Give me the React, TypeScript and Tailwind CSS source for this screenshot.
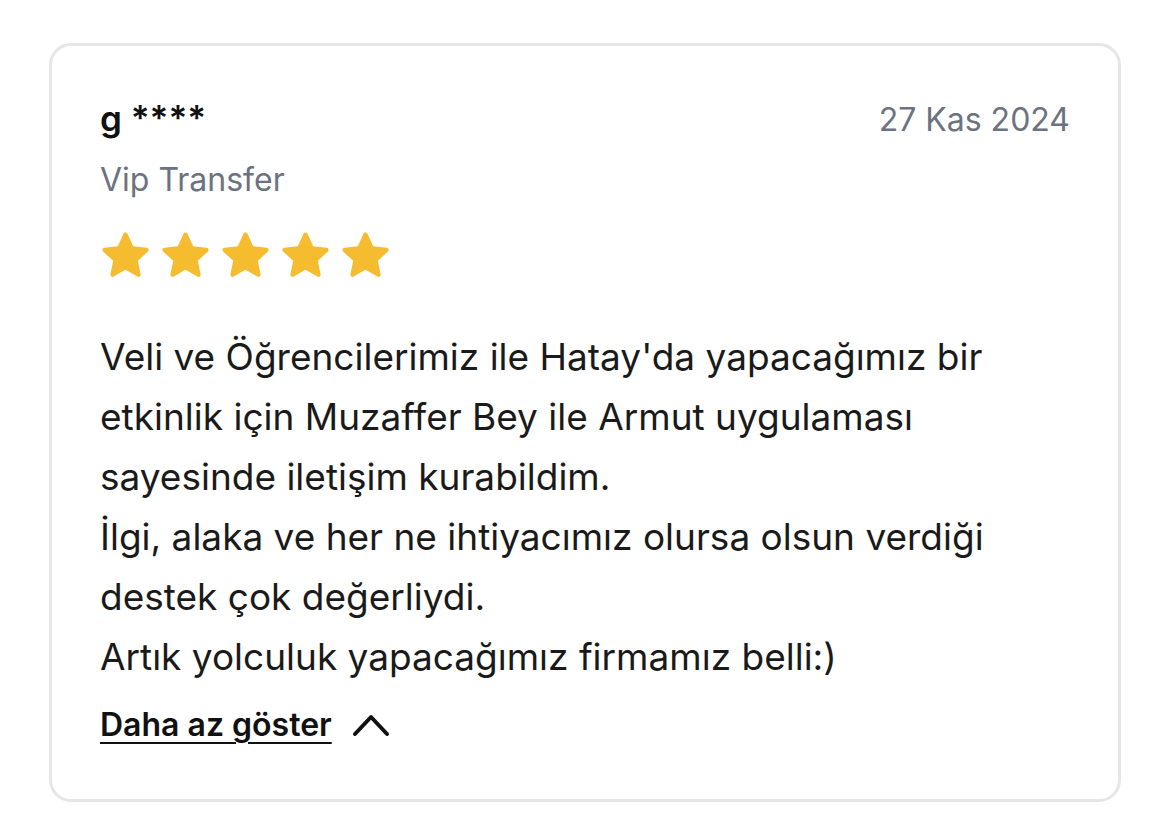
function Star() {
  return (
    <svg viewBox="0 0 24 24" className="h-[51px] w-[51px]" fill="#F6BC2F">
      <path d="M12 1.6c.4 0 .75.23.92.6l2.7 5.9 6.35.72c.87.1 1.22 1.18.57 1.77l-4.73 4.36 1.3 6.36c.18.86-.75 1.53-1.5 1.08L12 19.2l-5.6 3.2c-.76.44-1.68-.23-1.5-1.09l1.3-6.36L1.46 10.6c-.65-.6-.3-1.67.57-1.77l6.35-.72 2.7-5.9c.17-.37.52-.6.92-.6z" />
    </svg>
  )
}

const lines = [
  "Veli ve Öğrencilerimiz ile Hatay'da yapacağımız bir",
  'etkinlik için Muzaffer Bey ile Armut uygulaması',
  'sayesinde iletişim kurabildim.',
  'İlgi, alaka ve her ne ihtiyacımız olursa olsun verdiği',
  'destek çok değerliydi.',
  'Artık yolculuk yapacağımız firmamız belli:)',
]

export default function App() {
  return (
    <div className="min-h-screen bg-white pt-[43px] pl-[49px] pr-[49px] font-['Inter',sans-serif]">
      <div className="flex flex-col rounded-[22px] border-[3px] border-[#e6e6e6] px-[48px] pt-[52px] pb-[54px]">
        <div className="flex items-start justify-between">
          <div className="text-[35px] font-semibold leading-[40px] text-[#111]">g ****</div>
          <div className="pt-[2px] text-[32px] leading-[40px] text-[#6b7280]">27 Kas 2024</div>
        </div>
        <div className="mt-[20px] text-[32px] leading-[40px] text-[#6b7280]">Vip Transfer</div>
        <div className="mt-[29px] flex gap-[9px]">
          {[0, 1, 2, 3, 4].map((i) => (
            <Star key={i} />
          ))}
        </div>
        <div className="mt-[47px] text-[37px] leading-[60px] text-[#1a1a1a]">
          {lines.map((l) => (
            <div key={l}>{l}</div>
          ))}
        </div>
        <div className="mt-[18px] flex h-[40px] items-center gap-[20px]">
          <span className="text-[32px] font-semibold leading-[40px] text-[#111] underline decoration-[2px] underline-offset-[6px]">
            Daha az göster
          </span>
          <svg width="38" height="26" viewBox="0 0 38 26" fill="none" stroke="#111" strokeWidth="4" strokeLinecap="round" strokeLinejoin="round">
            <polyline points="3,22 19,5 35,22" />
          </svg>
        </div>
      </div>
    </div>
  )
}
